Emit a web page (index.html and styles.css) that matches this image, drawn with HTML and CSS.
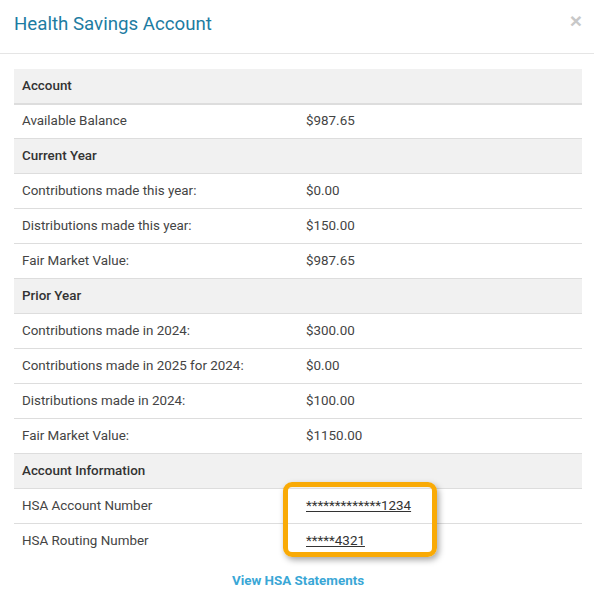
FILE: index.html
```html
<!DOCTYPE html>
<html lang="en">
<head>
<meta charset="utf-8">
<title>Health Savings Account</title>
<link rel="stylesheet" href="styles.css">
</head>
<body>
<div class="modal">
  <div class="modal-header">
    <h4 class="modal-title">Health Savings Account</h4>
    <button class="close" type="button" aria-label="Close">&times;</button>
  </div>
  <div class="modal-body">
    <div class="table-wrap">
      <table class="hsa-table">
        <thead>
          <tr class="section"><th colspan="2">Account</th></tr>
        </thead>
        <tbody>
          <tr class="first"><td>Available Balance</td><td>$987.65</td></tr>
          <tr class="section"><th colspan="2">Current Year</th></tr>
          <tr><td>Contributions made this year:</td><td>$0.00</td></tr>
          <tr><td>Distributions made this year:</td><td>$150.00</td></tr>
          <tr><td>Fair Market Value:</td><td>$987.65</td></tr>
          <tr class="section"><th colspan="2">Prior Year</th></tr>
          <tr><td>Contributions made in 2024:</td><td>$300.00</td></tr>
          <tr><td>Contributions made in 2025 for 2024:</td><td>$0.00</td></tr>
          <tr><td>Distributions made in 2024:</td><td>$100.00</td></tr>
          <tr><td>Fair Market Value:</td><td>$1150.00</td></tr>
          <tr class="section"><th colspan="2">Account Information</th></tr>
          <tr><td>HSA Account Number</td><td><a class="masked" href="#">*************1234</a></td></tr>
          <tr><td>HSA Routing Number</td><td><a class="masked" href="#">*****4321</a></td></tr>
        </tbody>
      </table>
      <div class="highlight"></div>
    </div>
    <div class="statements"><a href="#" class="statements-link">View HSA Statements</a></div>
  </div>
</div>
</body>
</html>
```
FILE: styles.css
```css
* { box-sizing: border-box; }
html, body { margin: 0; padding: 0; background: #fff; }
body {
  font-family: Roboto, "Liberation Sans", Arial, sans-serif;
  font-size: 13.4px;
  color: #444;
}
.modal { width: 594px; }
.modal-header {
  display: flex;
  justify-content: space-between;
  align-items: flex-start;
  height: 54px;
  padding: 11px 12px 0 14px;
  border-bottom: 1px solid #e5e5e5;
}
.modal-title {
  margin: 0;
  font-size: 18.7px;
  line-height: 26px;
  font-weight: 400;
  color: #1d7ca2;
}
.close {
  margin: -1px 0 0 0;
  padding: 0;
  border: 0;
  background: none;
  font-family: "Liberation Sans", Arial, sans-serif;
  font-size: 21px;
  font-weight: 700;
  line-height: 21px;
  color: #c8c8c8;
  cursor: pointer;
}
.modal-body { padding: 15px 12px 15px 14px; }
.table-wrap { position: relative; }
.hsa-table {
  width: 100%;
  border-collapse: collapse;
  table-layout: fixed;
}
.hsa-table th, .hsa-table td {
  padding: 8px;
  line-height: 18px;
  text-align: left;
  vertical-align: top;
  border-top: 1px solid #dddddd;
}
.hsa-table td:first-child { width: 50%; }
.hsa-table th {
  font-weight: 500;
  color: #333;
}
.hsa-table .section th { background: #f1f1f1; }
.hsa-table thead th {
  border-top: 0;
  border-bottom: 2px solid #dddddd;
}
.hsa-table tr.first td { border-top: 0; padding-top: 7px; }
.masked {
  color: #333;
  text-decoration: underline;
}
.highlight {
  position: absolute;
  left: 269px;
  top: 413px;
  width: 154px;
  height: 75px;
  border: 5px solid #f9aa06;
  border-radius: 9px;
  box-shadow: 2px 3px 6px rgba(0, 0, 0, 0.35);
  pointer-events: none;
}
.statements {
  margin-top: 14px;
  text-align: center;
  line-height: 18px;
}
.statements-link {
  color: #3aa7d6;
  font-weight: 700;
  text-decoration: none;
}
```
